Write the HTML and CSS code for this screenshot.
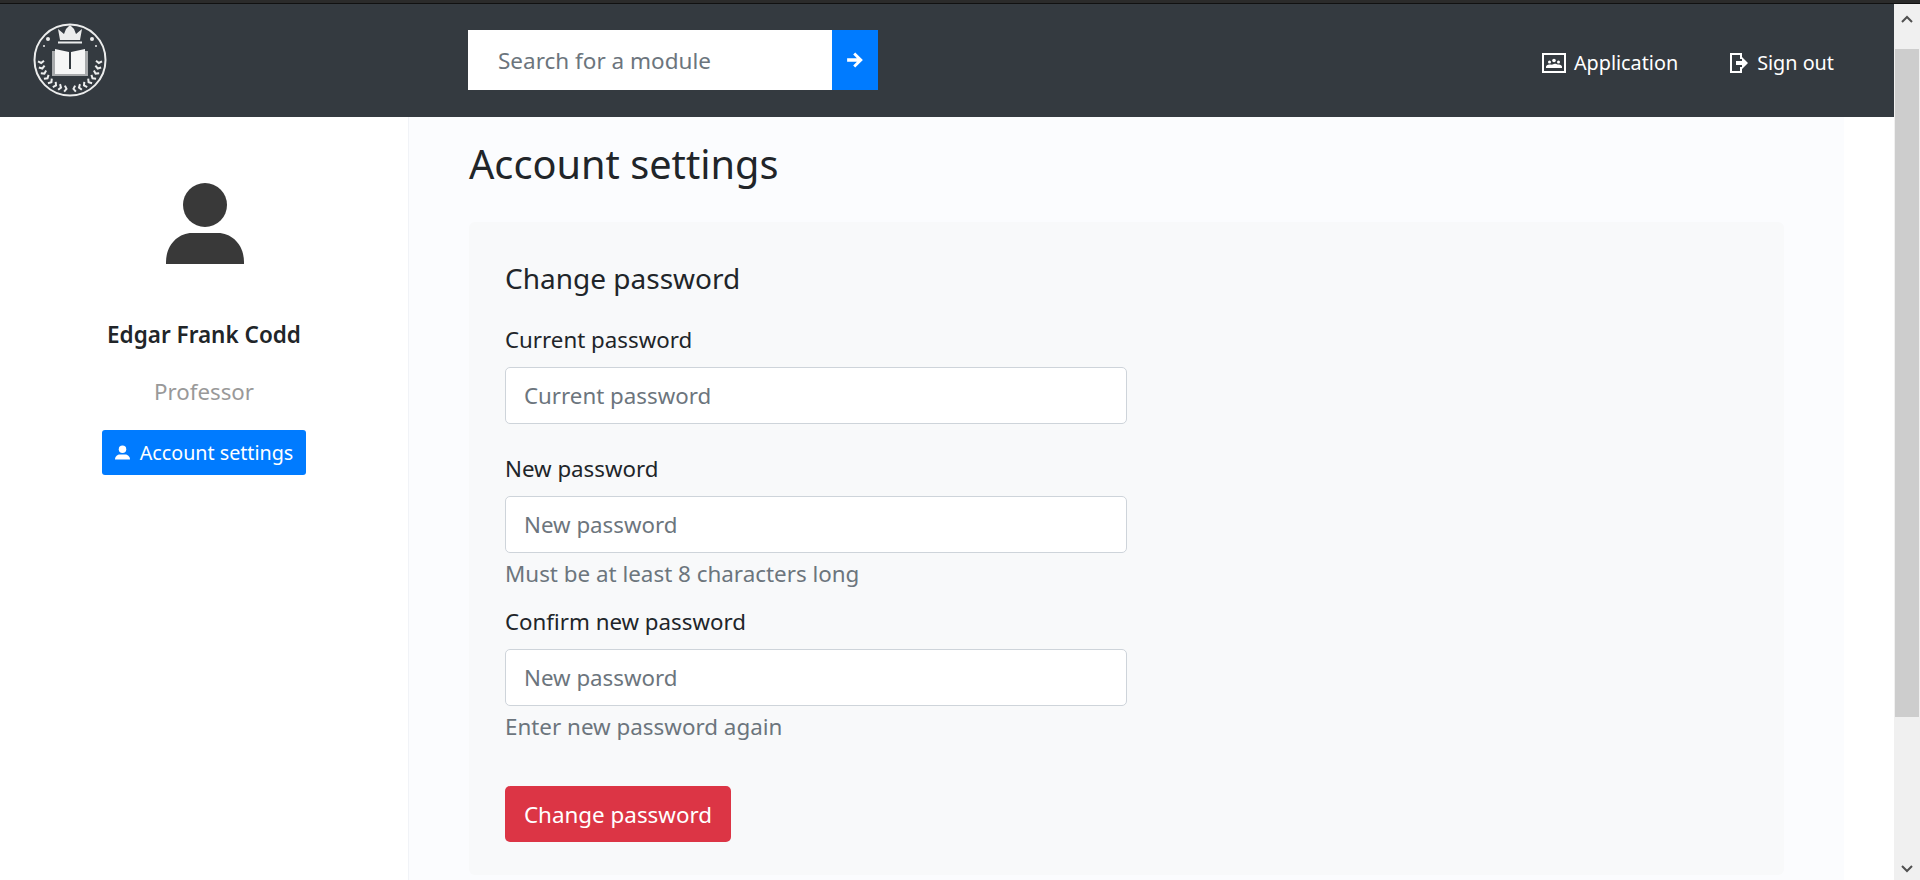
FILE: index.html
```html
<!doctype html>
<html>
<head>
<title>Account settings</title>
<link rel="stylesheet" href="styles.css">
</head>
<body>
	<div class="topStrip"></div>
	<div class="window">
		<div class="page">
			<div class="header">
				<svg class="logo" viewBox="0 0 74 74">
					<circle cx="37" cy="37" r="35.5" fill="none" stroke="#eceded" stroke-width="2"/>
					<path d="M25 6l6 5 2-5 4-4 4 4 2 5 6-5-2 11H27z" fill="#eceded"/>
					<rect x="25" y="18.500" width="24" height="2" fill="#eceded"/>
					<circle cx="15" cy="16" r="2" fill="#eceded"/>
					<circle cx="59" cy="16" r="2" fill="#eceded"/>
					<circle cx="11" cy="23" r="1" fill="#eceded"/>
					<circle cx="63" cy="23" r="1" fill="#eceded"/>
					<path d="M19 28h3v25h-3zM52 28h3v25h-3zM19 51h36v2H19z" fill="#a9abad"/>
					<path d="M22 26l14 3h2l14-3v25H22z" fill="#f6f6f6"/>
					<rect x="36" y="29" width="2" height="17" fill="#343a40"/>
					<g id="wreath" fill="none" stroke="#eceded" stroke-width="2">
						<path d="M-3-2L0 0L3-2" transform="translate(33.500 65.800) rotate(-83)"/>
						<path d="M-3-2L0 0L3-2" transform="translate(28 64.600) rotate(-72)"/>
						<path d="M-3-2L0 0L3-2" transform="translate(23 62.400) rotate(-61)"/>
						<path d="M-3-2L0 0L3-2" transform="translate(18.400 59.200) rotate(-50)"/>
						<path d="M-3-2L0 0L3-2" transform="translate(14.500 55.300) rotate(-39)"/>
						<path d="M-3-2L0 0L3-2" transform="translate(11.400 50.600) rotate(-28)"/>
						<path d="M-3-2L0 0L3-2" transform="translate(9.300 45.500) rotate(-17)"/>
						<path d="M-3-2L0 0L3-2" transform="translate(8.200 40) rotate(-6)"/>
					</g>
					<use href="#wreath" transform="translate(74 0) scale(-1 1)"/>
				</svg>
				<form class="search">
					<input class="searchInput" type="text" placeholder="Search for a module">
					<button class="searchButton" type="button">
						<svg viewBox="0 0 16 16" width="18" height="18"><path d="M8.200 1.300l6.800 6.700-6.800 6.700-1.800-1.800 3.300-3.400H1V6.500h8.700L6.400 3.100z" fill="#fff"/></svg>
					</button>
				</form>
				<nav class="nav">
					<a class="navLink">
						<svg viewBox="0 0 24 20" width="24" height="20"><path d="M1 1h22v18H1z" fill="none" stroke="#fff" stroke-width="2"/><path d="M4 13.500c1-2 3-2 4-2s1.500.5 4-.5 3 .5 4 .5 3 0 4 2v1.500H4z" fill="#fff"/><circle cx="7.500" cy="9" r="1.500" fill="#fff"/><circle cx="12" cy="7.500" r="1.800" fill="#fff"/><circle cx="16.500" cy="9" r="1.500" fill="#fff"/></svg>
						Application
					</a>
					<a class="navLink">
						<svg viewBox="0 0 19 20" width="19" height="20"><path d="M11 6V1H1v18h10v-5" fill="none" stroke="#fff" stroke-width="2"/><path d="M6 8h6V4l6 6-6 6v-4H6z" fill="#fff"/></svg>
						Sign out
					</a>
				</nav>
			</div>
			<div class="content">
				<div class="sidebar">
					<svg class="avatar" viewBox="0 0 78 81">
						<circle cx="39" cy="22" r="22" fill="#393939"/>
						<path d="M0 81V79C0 62 12 50 26 50H52C66 50 78 62 78 79V81z" fill="#393939"/>
					</svg>
					<div class="userName">Edgar Frank Codd</div>
					<div class="userRole">Professor</div>
					<a class="settingsButton">
						<svg viewBox="0 0 16 16" width="15" height="15"><circle cx="8" cy="4.500" r="4" fill="#fff"/><path d="M0 15.500c0-4 3-5.500 5-5.500h6c2 0 5 1.500 5 5.500z" fill="#fff"/></svg>
						Account settings
					</a>
				</div>
				<div class="main">
					<h1 class="pageTitle">Account settings</h1>
					<div class="card">
						<h2 class="cardTitle">Change password</h2>
						<div class="field fieldPlain">
							<label class="fieldLabel">Current password</label>
							<input class="fieldInput" type="password" placeholder="Current password">
						</div>
						<div class="field">
							<label class="fieldLabel">New password</label>
							<input class="fieldInput" type="password" placeholder="New password">
							<small class="fieldHelp">Must be at least 8 characters long</small>
						</div>
						<div class="field">
							<label class="fieldLabel">Confirm new password</label>
							<input class="fieldInput" type="password" placeholder="New password">
							<small class="fieldHelp">Enter new password again</small>
						</div>
						<button class="submitButton" type="button">Change password</button>
					</div>
				</div>
				<div class="rightGap"></div>
			</div>
		</div>
		<div class="scrollbar">
			<svg class="scrollArrow" viewBox="0 0 12 8" width="12" height="8"><path d="M1 7l5-5 5 5" fill="none" stroke="#505050" stroke-width="2"/></svg>
			<div class="scrollThumb"></div>
			<svg class="scrollArrow" viewBox="0 0 12 8" width="12" height="8"><path d="M1 1l5 5 5-5" fill="none" stroke="#505050" stroke-width="2"/></svg>
		</div>
	</div>
</body>
</html>
```

FILE: styles.css
```css
* {
	box-sizing: border-box;
}
html, body {
	height: 100%;
}
body {
	margin: 0;
	height: 880px;
	overflow: hidden;
	display: flex;
	flex-direction: column;
	font-family: "Noto Sans", "Open Sans", sans-serif;
	font-size: 22.3px;
	color: #212529;
	background-color: #fff;
}
.topStrip {
	height: 4px;
	flex: none;
	background-color: #2b2b2b;
	border-bottom: 1px solid #111;
}
.window {
	flex: 1;
	display: flex;
	min-height: 0;
}
.page {
	flex: 1;
	display: flex;
	flex-direction: column;
	min-width: 0;
}

/* header */
.header {
	height: 113px;
	flex: none;
	display: flex;
	align-items: flex-start;
	background-color: #343a40;
}
.logo {
	width: 74px;
	height: 74px;
	margin: 19px 0 0 33px;
}
.search {
	display: flex;
	margin: 26px 0 0 361px;
}
.searchInput {
	width: 364px;
	height: 60px;
	border: 0;
	padding: 0 30px;
	font-family: inherit;
	font-size: 22.5px;
	background-color: #fff;
	outline: none;
}
.searchInput::placeholder, .fieldInput::placeholder {
	color: #6c757d;
	opacity: 1;
}
.searchButton {
	width: 46px;
	height: 60px;
	border: 0;
	padding: 0;
	display: flex;
	align-items: center;
	justify-content: center;
	background-color: #007bff;
}
.nav {
	margin: 45px 60px 0 auto;
	display: flex;
	gap: 52px;
	font-size: 19.8px;
	line-height: 27px;
}
.navLink {
	display: flex;
	align-items: center;
	gap: 8px;
	color: #fff;
}

/* sidebar */
.content {
	flex: 1;
	display: flex;
	min-height: 0;
}
.sidebar {
	width: 409px;
	flex: none;
	display: flex;
	flex-direction: column;
	align-items: center;
	border-right: 1px solid #f1f3f7;
	background-color: #fff;
	padding-top: 66px;
}
.avatar {
	width: 78px;
	height: 81px;
	margin-left: 2px;
}
.userName {
	margin-top: 56px;
	font-size: 22.5px;
	font-weight: 600;
	line-height: 30px;
}
.userRole {
	margin-top: 27px;
	line-height: 30px;
	color: #999;
}
.settingsButton {
	margin-top: 23px;
	height: 45px;
	width: 204px;
	display: flex;
	align-items: center;
	justify-content: center;
	gap: 10px;
	border-radius: 3px;
	font-size: 19.7px;
	color: #fff;
	background-color: #007bff;
}

/* main */
.main {
	flex: 1;
	min-width: 0;
	padding: 0 60px;
	background-color: #fbfcfe;
}
.pageTitle {
	margin: 18px 0 29px;
	font-size: 39.7px;
	font-weight: 400;
	line-height: 58px;
}
.card {
	height: 653px;
	padding: 36px;
	border-radius: 6px;
	background-color: #f8f9fa;
}
.cardTitle {
	margin: 0 0 25px;
	font-size: 28px;
	font-weight: 400;
	line-height: 40px;
}
.field {
	display: flex;
	flex-direction: column;
	margin-bottom: 15px;
}
.fieldPlain {
	margin-bottom: 28px;
}
.fieldLabel {
	line-height: 33px;
	margin-bottom: 11px;
}
.fieldInput {
	width: 622px;
	height: 57px;
	padding: 0 18px;
	border: 1px solid #ced4da;
	border-radius: 5px;
	font-family: inherit;
	font-size: 22.3px;
	background-color: #fff;
}
.fieldHelp {
	margin-top: 4px;
	font-size: 22.4px;
	line-height: 33px;
	color: #6c757d;
}
.submitButton {
	margin-top: 28px;
	width: 226px;
	height: 56px;
	border: 0;
	border-radius: 5px;
	font-family: inherit;
	font-size: 22.4px;
	color: #fff;
	background-color: #dc3545;
}
.rightGap {
	width: 50px;
	flex: none;
	background-color: #fff;
}

/* scrollbar */
.scrollbar {
	width: 26px;
	flex: none;
	display: flex;
	flex-direction: column;
	align-items: center;
	background-color: #f0f0f0;
	padding: 11px 0 7px;
}
.scrollThumb {
	width: 24px;
	height: 668px;
	margin-top: 26px;
	background-color: #cdcdcd;
}
.scrollArrow {
	flex: none;
}
.scrollThumb + .scrollArrow {
	margin-top: auto;
}
```
